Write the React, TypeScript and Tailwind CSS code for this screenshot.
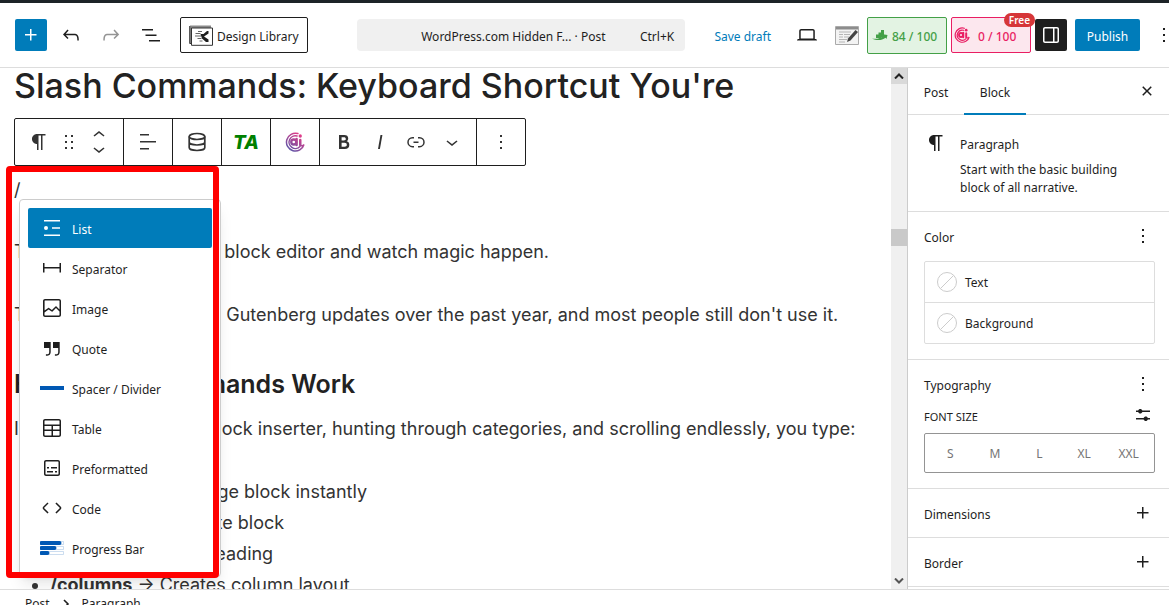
import React from "react";

type IconProps = { d: string; className?: string };

function Icon({ d, className = "size-6" }: IconProps) {
  return (
    <svg viewBox="0 0 24 24" fill="currentColor" aria-hidden="true" className={`shrink-0 ${className}`}>
      <path d={d} />
    </svg>
  );
}

const P = {
  plus: "M11 12.5V17.5H12.5V12.5H17.5V11H12.5V6H11V11H6V12.5H11Z",
  undo: "M18.3 11.7c-.6-.6-1.4-.9-2.3-.9H6.7l2.9-3.3-1.1-1-4.5 5L8.5 16l1-1-2.7-2.7H16c.5 0 .9.2 1.3.5 1 1 1 3.4 1 4.5v.3h1.5v-.2c0-1.5 0-4.3-1.5-5.7z",
  redo: "M15.6 6.5l-1.1 1 2.9 3.3H8c-.9 0-1.7.3-2.3.9-1.4 1.5-1.4 4.2-1.4 5.6v.2h1.5v-.3c0-1.1 0-3.5 1-4.5.3-.3.7-.5 1.3-.5h9.2L14.5 15l1.1 1.1 4.6-4.6-4.6-5z",
  listView: "M3 6h11v1.5H3V6Zm3.5 5.5h11V13h-11v-1.5ZM21 17H10v1.5h11V17Z",
  paragraph: "m9.996 14v-.225l.004 0v6.225h1.5v-14.5h2.5v14.5h1.5v-14.5h3v-1.5h-8.504c-2.761 0-5 2.239-5 5 0 2.761 2.239 5 5 5z",
  drag: "M8 7h2V5H8v2zm0 6h2v-2H8v2zm0 6h2v-2H8v2zm6-14v2h2V5h-2zm0 8h2v-2h-2v2zm0 6h2v-2h-2v2z",
  up: "M6.5 12.4L12 8l5.5 4.4-.9 1.2L12 10l-4.5 3.6-1-1.2z",
  down: "M17.5 11.6L12 16l-5.5-4.4.9-1.2L12 14l4.5-3.6 1 1.2z",
  align: "M13 5.5H4V4h9v1.5Zm7 7H4V11h16v1.5Zm-7 7H4V18h9v1.5Z",
  bold: "M14.7 11.3c1-.6 1.5-1.6 1.5-3 0-2.3-1.3-3.4-4-3.4H7v14h5.8c1.4 0 2.5-.3 3.3-1 .8-.7 1.2-1.7 1.2-2.9.1-1.9-.8-3.1-2.6-3.7zm-5.1-4h2.3c.6 0 1.1.1 1.4.4.3.3.5.7.5 1.2s-.2 1-.5 1.2c-.3.3-.8.4-1.4.4H9.6V7.3zm4.6 9c-.4.3-1 .4-1.7.4H9.6v-3.9h2.9c.7 0 1.3.2 1.7.5.4.3.6.8.6 1.5s-.2 1.2-.6 1.5z",
  italic: "M12.5 5L10 19h1.9l2.5-14z",
  link: "M10 17.389H8.444A5.194 5.194 0 1 1 8.444 7H10v1.5H8.444a3.694 3.694 0 0 0 0 7.389H10v1.5ZM14 7h1.556a5.194 5.194 0 0 1 0 10.39H14v-1.5h1.556a3.694 3.694 0 0 0 0-7.39H14V7Zm-4.5 6h5v-1.5h-5V13Z",
  more: "M13 19h-2v-2h2v2zm0-6h-2v-2h2v2zm0-6h-2V5h2v2z",
  desktop: "M20.5 16h-.7V8c0-1.1-.9-2-2-2H6.2c-1.1 0-2 .9-2 2v8h-.7c-.8 0-1.5.7-1.5 1.5h20c0-.8-.7-1.5-1.5-1.5zM5.7 8c0-.3.2-.5.5-.5h11.6c.3 0 .5.2.5.5v7.6H5.7V8z",
  drawer: "M18 4H6c-1.1 0-2 .9-2 2v12c0 1.1.9 2 2 2h12c1.1 0 2-.9 2-2V6c0-1.1-.9-2-2-2zm-4 14.5H6c-.3 0-.5-.2-.5-.5V6c0-.3.2-.5.5-.5h8v13zm4.5-.5c0 .3-.2.5-.5.5h-2.5v-13H18c.3 0 .5.2.5.5v12z",
  close: "M12 13.06l3.712 3.713 1.061-1.06L13.061 12l3.712-3.712-1.06-1.06L12 10.938 8.288 7.227l-1.061 1.06L10.939 12l-3.712 3.712 1.06 1.061L12 13.061z",
  separator: "M4.5 12.5v4H3V7h1.5v3.987h15V7H21v9.5h-1.5v-4h-15Z",
  image: "M19 3H5c-1.1 0-2 .9-2 2v14c0 1.1.9 2 2 2h14c1.1 0 2-.9 2-2V5c0-1.1-.9-2-2-2zM5 4.5h14c.3 0 .5.2.5.5v8.4l-3-2.9c-.3-.3-.8-.3-1 0L11.9 14 9 12c-.3-.2-.6-.2-.8 0l-3.6 2.6V5c-.1-.3.1-.5.4-.5zm14 15H5c-.3 0-.5-.2-.5-.5v-2.4l4.1-3 3 1.9c.3.2.7.2.9-.1L16 12l3.5 3.4V19c0 .3-.2.5-.5.5z",
  quote: "M13 6v6h5.2v4c0 .8-.2 1.4-.5 1.7-.6.6-1.6.6-2.5.5h-.3v1.5h.5c1 0 2.3-.1 3.3-1 .6-.6 1-1.6 1-2.8V6H13zm-9 6h5.2v4c0 .8-.2 1.4-.5 1.7-.6.6-1.6.6-2.5.5h-.3v1.5h.5c1 0 2.3-.1 3.3-1 .6-.6 1-1.6 1-2.8V6H4v6z",
  table: "M19 3H5c-1.1 0-2 .9-2 2v14c0 1.1.9 2 2 2h14c1.1 0 2-.9 2-2V5c0-1.1-.9-2-2-2zM5 4.5h14c.3 0 .5.2.5.5v3.5h-15V5c0-.3.2-.5.5-.5zm8 5.5h6.5v3.5H13V10zm-1.5 3.5h-7V10h7v3.5zm-7 5.5v-4h7v4.5H5c-.3 0-.5-.2-.5-.5zm14.5.5h-6V15h6.5v4c0 .3-.2.5-.5.5z",
  preformatted: "M18 4H6c-1.1 0-2 .9-2 2v12c0 1.1.9 2 2 2h12c1.1 0 2-.9 2-2V6c0-1.1-.9-2-2-2zm.5 14c0 .3-.2.5-.5.5H6c-.3 0-.5-.2-.5-.5V6c0-.3.2-.5.5-.5h12c.3 0 .5.2.5.5v12zM7 16.5h6V15H7v1.5zm4-4h6V11h-6v1.5zM9 11H7v1.5h2V11zm6 5.5h2V15h-2v1.5z",
  code: "M20.8 10.7l-4.3-4.3-1.1 1.1 4.3 4.3c.1.1.1.3 0 .4l-4.3 4.3 1.1 1.1 4.3-4.3c.7-.8.7-1.9 0-2.6zM4.2 11.8l4.3-4.3-1-1-4.3 4.3c-.7.7-.7 1.8 0 2.5l4.3 4.3 1.1-1.1-4.3-4.3c-.2-.1-.2-.3-.1-.4z",
  settings: "m19 7.5h-7.628c-.309-.874-1.142-1.5-2.122-1.5-.98 0-1.813.626-2.122 1.5h-2.128v1.5h2.128c.309.874 1.142 1.5 2.122 1.5.98 0 1.813-.626 2.122-1.5h7.628zm0 7.5h-2.128c-.309-.874-1.142-1.5-2.122-1.5s-1.813.626-2.122 1.5h-7.628v1.5h7.628c.309.874 1.142 1.5 2.122 1.5s1.813-.626 2.122-1.5h2.128z",
};

function ListIcon() {
  return (
    <svg viewBox="0 0 24 24" className="size-6 shrink-0" fill="currentColor" aria-hidden="true">
      <path d="M4 4h16v1.5H4zM12 11.25h8v1.5h-8zM4 18.5h16V20H4z" />
      <circle cx="6" cy="12" r="2" />
    </svg>
  );
}

function SpacerIcon() {
  return (
    <svg viewBox="0 0 24 24" className="size-6 shrink-0" aria-hidden="true">
      <path d="M0 10h24v4H0z" fill="#0058b4" />
    </svg>
  );
}

function ProgressIcon() {
  return (
    <svg viewBox="0 0 24 24" className="size-6 shrink-0" aria-hidden="true">
      <g fill="#fff" stroke="#a9c6e6" strokeWidth=".6">
        <path d="M.5 5.5h23v3H.5zM.5 10.5h23v3H.5zM.5 15.5h23v3H.5z" />
      </g>
      <path d="M1.5 5h18a1.5 1.5 0 0 1 0 4h-18a1.5 1.5 0 0 1 0-4zM1.5 10h13a1.5 1.5 0 0 1 0 4h-13a1.5 1.5 0 0 1 0-4zM1.5 15h6a1.5 1.5 0 0 1 0 4h-6a1.5 1.5 0 0 1 0-4z" fill="#0058b4" />
    </svg>
  );
}

function DatabaseIcon() {
  return (
    <svg viewBox="0 0 24 24" className="size-6" fill="none" stroke="currentColor" strokeWidth="1.7" aria-hidden="true">
      <ellipse cx="12" cy="6.5" rx="7.8" ry="3" />
      <path d="M4.2 6.5v11c0 1.7 3.5 3 7.8 3s7.8-1.3 7.8-3v-11M4.2 12c0 1.7 3.5 3 7.8 3s7.8-1.3 7.8-3" />
    </svg>
  );
}

function SwirlIcon({ className, gradient }: { className: string; gradient?: boolean }) {
  const color = gradient ? "url(#swirl)" : "currentColor";
  return (
    <svg viewBox="0 0 24 24" className={className} fill="none" stroke={color} strokeWidth="1.8" strokeLinecap="round" aria-hidden="true">
      {gradient && (
        <defs>
          <linearGradient id="swirl" x1="20" y1="2" x2="5" y2="22" gradientUnits="userSpaceOnUse">
            <stop offset="0" stopColor="#ee3a86" />
            <stop offset="1" stopColor="#5b56a8" />
          </linearGradient>
        </defs>
      )}
      <path d="M15.5 1.9A10.7 10.7 0 1 0 22.8 15c-.9 1.6-2.300 1.700-3.800 1.200" />
      <path d="M14.500 4.900A7.600 7.600 0 1 0 18 17.500" />
      <circle cx="10.500" cy="12" r="3" strokeWidth="2.800" />
      <path d="M13.900 8.500v7M18.300 9.500v6" strokeWidth="3" />
      <circle cx="18.300" cy="4.800" r="2" fill={color} stroke="none" />
    </svg>
  );
}

function LibraryIcon() {
  return (
    <svg viewBox="0 0 24 21" className="h-[21px] w-6 shrink-0" aria-hidden="true">
      <path d="M1 .5h21V3H3v15H1z" fill="#8a8a8a" />
      <path d="M.7 1v17.500H3" stroke="#333" fill="none" />
      <path d="M2.500 3h21v17.300h-21z" fill="#fff" stroke="#333" />
      <path d="M6.500 8.500h5M9 6.500h4M6 11h6M8.500 13.500h4M10.500 16h3" stroke="#666" strokeWidth="1" />
      <path d="M11.500 9h3L18 6h1.500v2.500L15 11.500l4.500 3V17H17l-4-3.500z" fill="#1e1e1e" />
    </svg>
  );
}

function EditIcon() {
  return (
    <svg viewBox="0 0 24 19" className="h-[19px] w-6 shrink-0" aria-hidden="true">
      <path d="M.5.5h23v18H.5z" fill="#f3f3f3" stroke="#aaa" />
      <path d="M1 1h22v2.500H1z" fill="#8d8d8d" />
      <path d="M4 6h12M4 8.500h4M9 8.500h6M4 11h4M9 11h5M4 13.500h8M4 16h6" stroke="#b5b5b5" strokeWidth="1.2" />
      <path d="m12 16 1-3.500L20.500 4l2.500 2-7.500 8.500z" fill="#444" />
    </svg>
  );
}

function ScoreIcon() {
  return (
    <svg viewBox="0 0 16 12" className="h-3 w-4 shrink-0" fill="currentColor" aria-hidden="true">
      <path d="M4 5.500h2.500V9H4zM6.500 3.500h2.500V9H6.500zM9 1h3v7H9zM0 9.500c4 .8 8 .2 12-3l-1-1.300 4.500.8-1 4-1-1.200C9.500 12 4 11.500 0 9.500z" />
    </svg>
  );
}

function Swatch() {
  return (
    <svg viewBox="0 0 20 20" className="size-5 shrink-0" fill="none" stroke="#ccc" aria-hidden="true">
      <circle cx="10" cy="10" r="9.500" />
      <path d="M3.500 16.500l13-13" />
    </svg>
  );
}

const blocks: { name: string; icon: React.ReactNode }[] = [
  { name: "List", icon: <ListIcon /> },
  { name: "Separator", icon: <Icon d={P.separator} /> },
  { name: "Image", icon: <Icon d={P.image} /> },
  { name: "Quote", icon: <Icon d={P.quote} /> },
  { name: "Spacer / Divider", icon: <SpacerIcon /> },
  { name: "Table", icon: <Icon d={P.table} /> },
  { name: "Preformatted", icon: <Icon d={P.preformatted} /> },
  { name: "Code", icon: <Icon d={P.code} /> },
  { name: "Progress Bar", icon: <ProgressIcon /> },
];

function Header() {
  return (
    <header className="flex h-[65px] shrink-0 items-center overflow-hidden border-b border-[#ddd] pl-[15px]">
      <div className="flex items-center gap-2">
        <button aria-label="Block inserter" className="grid size-8 place-items-center rounded-xs bg-[#007cba] text-white"><Icon d={P.plus} /></button>
        <button aria-label="Undo" className="grid size-8 place-items-center"><Icon d={P.undo} /></button>
        <button aria-label="Redo" className="grid size-8 place-items-center text-[#949494]"><Icon d={P.redo} /></button>
        <button aria-label="Document overview" className="grid size-8 place-items-center"><Icon d={P.listView} /></button>
      </div>
      <button className="ml-[13px] flex h-9 w-32 shrink-0 items-center gap-1 rounded-xs border border-[#1e1e1e] pl-2 whitespace-nowrap">
        <LibraryIcon />
        <span className="pt-1">Design Library</span>
      </button>
      <div className="flex flex-1 justify-center pl-5">
        <button className="flex h-8 w-[328px] items-center rounded bg-[#f0f0f0] pt-1 pr-[11px] pl-16 whitespace-nowrap">
          <span>WordPress.com Hidden F... · Post</span>
          <span className="ml-auto">Ctrl+K</span>
        </button>
      </div>
      <button className="pt-1 whitespace-nowrap text-[#007cba]">Save draft</button>
      <button aria-label="View" className="ml-6 shrink-0"><Icon d={P.desktop} /></button>
      <button aria-label="Edit notes" className="ml-4 shrink-0"><EditIcon /></button>
      <button className="ml-2 flex h-[37px] w-20 shrink-0 items-center gap-1 rounded-xs border border-[#43a047] bg-[#e3f3e3] pl-1 font-medium whitespace-nowrap text-[#43a047]">
        <ScoreIcon />
        <span className="pt-1">84 / 100</span>
      </button>
      <button className="relative ml-1 flex h-9 w-20 shrink-0 items-center gap-2 rounded-xs border border-[#e91e63] bg-[#fce7ee] pl-[2px] font-medium whitespace-nowrap text-[#e91e63]">
        <SwirlIcon className="size-4 shrink-0" />
        <span className="pt-1">0 / 100</span>
        <span className="absolute -top-[5px] -right-[5px] rounded-full bg-[#d63638] px-[5px] text-[10px] leading-[14px] font-semibold text-white">Free</span>
      </button>
      <button aria-label="Settings" className="ml-1 grid size-8 shrink-0 place-items-center rounded-xs bg-[#1e1e1e] text-white"><Icon d={P.drawer} /></button>
      <button className="ml-2 h-8 w-[65px] shrink-0 rounded-xs bg-[#007cba] pt-1 text-white">Publish</button>
      <button aria-label="Options" className="ml-3 -mr-[7px] shrink-0"><Icon d={P.more} /></button>
    </header>
  );
}

function BlockToolbar() {
  return (
    <div role="toolbar" className="flex h-12 w-fit shrink-0 divide-x divide-[#1e1e1e] rounded-xs border border-[#1e1e1e] bg-white">
      <div className="flex w-[109px] items-center gap-[6px] pl-3">
        <button aria-label="Paragraph"><Icon d={P.paragraph} /></button>
        <button aria-label="Drag"><Icon d={P.drag} /></button>
        <span className="flex flex-col">
          <button aria-label="Move up"><Icon d={P.up} /></button>
          <button aria-label="Move down" className="-mt-[10px]"><Icon d={P.down} /></button>
        </span>
      </div>
      <button aria-label="Align text" className="grid w-[49px] place-items-center"><Icon d={P.align} /></button>
      <button aria-label="Dynamic content" className="grid w-[49px] place-items-center"><DatabaseIcon /></button>
      <button className="w-[49px] font-[Inter,sans-serif] text-[19px] font-extrabold text-[#008000] italic">TA</button>
      <button aria-label="AI assistant" className="grid w-[49px] place-items-center"><SwirlIcon className="size-5" gradient /></button>
      <div className="flex w-[157px] items-center justify-center gap-3">
        <button aria-label="Bold"><Icon d={P.bold} /></button>
        <button aria-label="Italic"><Icon d={P.italic} /></button>
        <button aria-label="Link"><Icon d={P.link} /></button>
        <button aria-label="More"><Icon d={P.down} /></button>
      </div>
      <button aria-label="Options" className="grid w-12 place-items-center"><Icon d={P.more} /></button>
    </div>
  );
}

function SlashMenu() {
  return (
    <div role="listbox" aria-label="Blocks" className="absolute top-[131px] left-[19px] h-[378px] w-[202px] overflow-hidden rounded border border-[#ccc] bg-white p-2 shadow-lg">
      {blocks.map((b, i) => (
        <button
          key={b.name}
          role="option"
          aria-selected={i === 0}
          className={`flex h-10 w-full items-center gap-2 rounded-xs px-3 ${i === 0 ? "bg-[#007cba] text-white" : ""}`}
        >
          {b.icon}
          <span className="pt-1">{b.name}</span>
        </button>
      ))}
    </div>
  );
}

function Editor() {
  return (
    <main className="relative min-w-0 flex-1 overflow-hidden">
      <div className="flex flex-col pl-[14px] font-[Inter,sans-serif] text-[18px] leading-[31px] whitespace-nowrap text-[#333]">
        <h1 className="h-[50px] text-[34px] leading-9 font-medium text-[#222]">Slash Commands: Keyboard Shortcut You're</h1>
        <BlockToolbar />
        <p className="mt-2">/</p>
        <p className="mt-[31px]">Type / anywhere in your block editor and watch magic happen.</p>
        <p className="mt-8">This feature arrived with Gutenberg updates over the past year, and most people still don't use it.</p>
        <h3 className="mt-[38px] text-[25px] leading-8 font-semibold text-[#222]">How Slash Commands Work</h3>
        <p className="mt-[13px]">Instead of clicking the block inserter, hunting through categories, and scrolling endlessly, you type:</p>
        <ul className="mt-8 list-disc pl-9">
          <li><b>/image</b> → Adds image block instantly</li>
          <li><b>/quote</b> → Adds quote block</li>
          <li><b>/heading</b> → Adds heading</li>
          <li><b>/columns</b> → Creates column layout</li>
        </ul>
      </div>
      <SlashMenu />
      <div className="pointer-events-none absolute top-[98px] left-[6px] h-[412px] w-[213px] rounded border-6 border-[#f00]" />
    </main>
  );
}

function Scrollbar() {
  return (
    <div className="flex w-4 shrink-0 flex-col items-center bg-[#f0f0f0]" aria-hidden="true">
      <span className="grid h-4 w-4 place-items-center bg-[#d9d9d9]">
        <svg viewBox="0 0 10 6" className="h-[6px] w-[10px]" fill="none" stroke="#222" strokeWidth="2"><path d="M1 5.500l4-4 4 4" /></svg>
      </span>
      <span className="mt-[145px] h-[17px] w-4 bg-[#c9c9c9]" />
      <span className="mt-auto grid h-4 w-4 place-items-center">
        <svg viewBox="0 0 10 6" className="h-[6px] w-[10px]" fill="none" stroke="#555" strokeWidth="2"><path d="M1 .5l4 4 4-4" /></svg>
      </span>
    </div>
  );
}

function PanelTitle({ title, icon, label }: { title: string; icon: string; label: string }) {
  return (
    <div className="flex h-12 items-center justify-between">
      <h2 className="pt-1">{title}</h2>
      <button aria-label={label}><Icon d={icon} /></button>
    </div>
  );
}

function Sidebar() {
  return (
    <aside className="w-[262px] shrink-0 overflow-hidden border-l border-[#ccc]">
      <div className="flex h-[47px] items-stretch border-b border-[#ddd]">
        <button className="w-14 pt-1">Post</button>
        <button className="-mb-px w-[62px] border-b-2 border-[#007cba] pt-1">Block</button>
        <button aria-label="Close settings" className="mr-[10px] ml-auto"><Icon d={P.close} /></button>
      </div>
      <div className="flex h-[97px] gap-3 border-b border-[#ddd] pt-4 pr-8 pl-4">
        <Icon d={P.paragraph} />
        <div className="pt-1">
          <h2 className="leading-5">Paragraph</h2>
          <p className="mt-[6px] leading-[18px]">Start with the basic building block of all narrative.</p>
        </div>
      </div>
      <section className="h-[148px] border-b border-[#ddd] pr-[14px] pl-4">
        <PanelTitle title="Color" icon={P.more} label="Color options" />
        <ul className="mt-px divide-y divide-[#ddd] rounded-xs border border-[#ddd]">
          {["Text", "Background"].map((t) => (
            <li key={t}>
              <button className="flex h-10 w-full items-center gap-2 pl-3"><Swatch /><span className="pt-[2px]">{t}</span></button>
            </li>
          ))}
        </ul>
      </section>
      <section className="h-[129px] border-b border-[#ddd] pr-[14px] pl-4">
        <PanelTitle title="Typography" icon={P.more} label="Typography options" />
        <div className="flex h-[25px] items-start justify-between">
          <span className="pt-px text-[11px] leading-4">FONT SIZE</span>
          <button aria-label="Set custom size" className="-mt-[5px]"><Icon d={P.settings} /></button>
        </div>
        <div className="grid h-10 grid-cols-5 rounded-xs border border-[#949494] px-[3px] pt-[2px] text-[#757575]">
          {["S", "M", "L", "XL", "XXL"].map((s) => <button key={s}>{s}</button>)}
        </div>
      </section>
      {["Dimensions", "Border"].map((t) => (
        <section key={t} className="h-[49px] border-b border-[#ddd] pr-[14px] pl-4">
          <PanelTitle title={t} icon={P.plus} label={`${t} options`} />
        </section>
      ))}
    </aside>
  );
}

export default function App() {
  return (
    <div className="flex h-screen flex-col overflow-hidden border-t-3 border-[#1d2327] bg-white font-['Noto_Sans',sans-serif] text-[12px] text-[#1e1e1e]">
      <Header />
      <div className="flex min-h-0 flex-1">
        <Editor />
        <Scrollbar />
        <Sidebar />
      </div>
      <footer className="h-4 shrink-0 overflow-hidden border-t border-[#ddd]">
        <nav aria-label="Block breadcrumb" className="flex h-7 items-center gap-2 pl-[25px]">
          <a href="#post">Post</a>
          <svg viewBox="0 0 6 10" className="h-[10px] w-4" fill="none" stroke="currentColor" strokeWidth="1.6" aria-hidden="true"><path d="M1 1l4 4-4 4" /></svg>
          <a href="#paragraph">Paragraph</a>
        </nav>
      </footer>
    </div>
  );
}
